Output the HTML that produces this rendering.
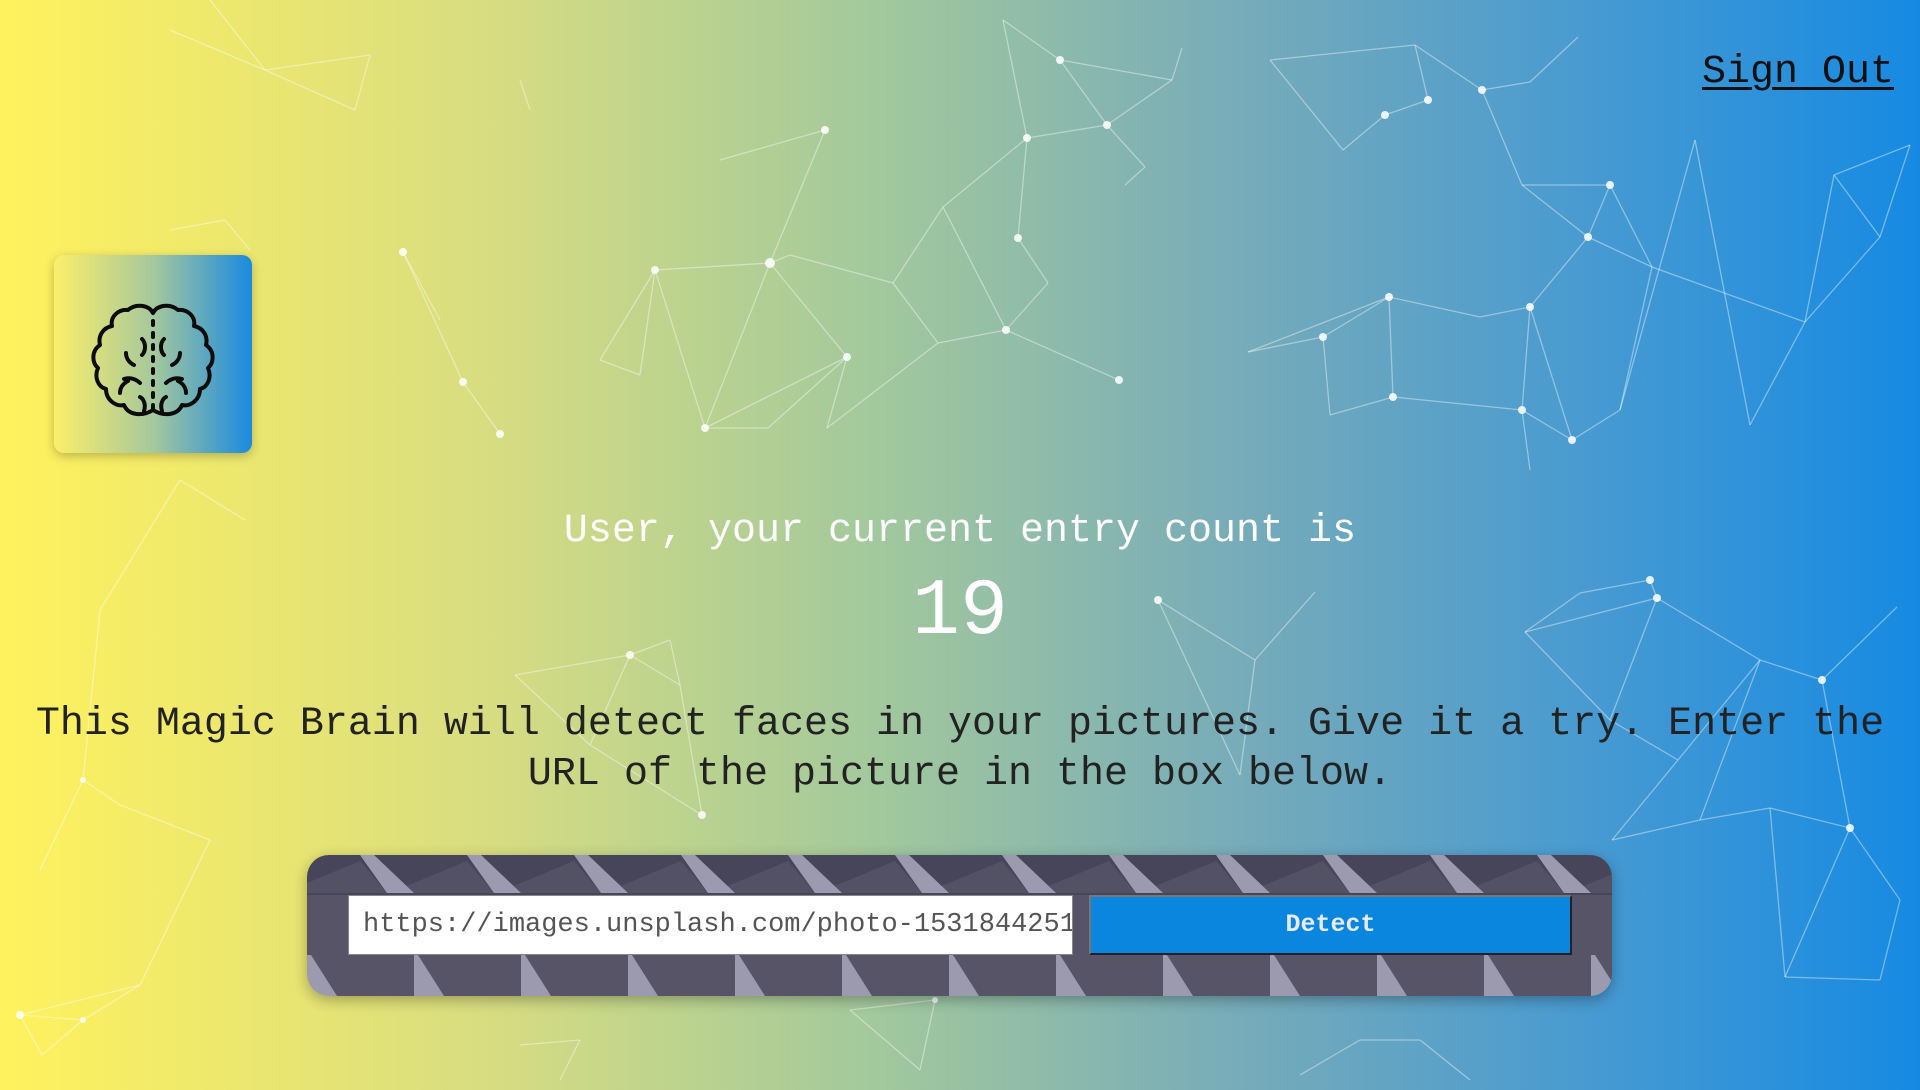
<!DOCTYPE html>
<html><head><meta charset="utf-8">
<style>
html,body{margin:0;padding:0;width:1920px;height:1090px;overflow:hidden}
body{background:linear-gradient(90deg,#fff25e 0%,#d8dd80 25%,#a4c99c 45%,#76abb9 65%,#4a9bd0 82%,#168ae2 100%);font-family:"Liberation Mono",monospace;position:relative}
#net{position:absolute;left:0;top:0}
.signout{position:absolute;left:1702px;top:50px;font-size:40px;color:#111;text-decoration:underline;text-decoration-thickness:3px;text-underline-offset:5px}
.logo{position:absolute;left:54px;top:255px;width:198px;height:198px;border-radius:10px;background:linear-gradient(90deg,#fbef6a,#a6c89c 50%,#1a8ae0);box-shadow:0 3px 10px rgba(0,0,0,.25)}
.t1{position:absolute;left:0;width:1920px;top:507px;text-align:center;color:#fff;font-size:40px;line-height:50px}
.t2{position:absolute;left:0;width:1920px;top:568px;text-align:center;color:#fff;font-size:80px;line-height:90px}
.t3{position:absolute;left:0;width:1920px;top:700px;text-align:center;color:#222;font-size:40px;line-height:50px}
.form{position:absolute;left:307px;top:855px;width:1305px;height:141px;border-radius:22px;overflow:hidden;box-shadow:0 4px 14px rgba(0,0,0,.3)}
.inp{position:absolute;left:41px;top:40px;width:725px;height:60px;background:#fff;box-sizing:border-box;border:1px solid #888;font-size:27px;line-height:58px;padding-left:14px;color:#555;white-space:nowrap;overflow:hidden}
.btn{position:absolute;left:782px;top:40px;width:483px;height:60px;background:#0a86de;box-sizing:border-box;border:2px solid #555;border-top-color:#777;border-left-color:#777;border-bottom-color:#222;border-right-color:#222;color:#e8eaff;font-size:25px;font-weight:bold;text-align:center;line-height:56px}
</style></head><body>
<svg id="net" width="1920" height="1090" stroke="#fff" stroke-opacity="0.4" stroke-width="1.3" fill="#fff">
<g>
<line x1="210" y1="0" x2="265" y2="70"/><line x1="265" y1="70" x2="370" y2="55"/><line x1="370" y1="55" x2="355" y2="110"/><line x1="265" y1="70" x2="355" y2="110"/><line x1="520" y1="80" x2="530" y2="110"/><line x1="170" y1="30" x2="265" y2="70"/>
<line x1="170" y1="230" x2="225" y2="220"/><line x1="225" y1="220" x2="250" y2="250"/>
<line x1="403" y1="252" x2="463" y2="382"/><line x1="463" y1="382" x2="500" y2="434"/><line x1="403" y1="252" x2="440" y2="320"/>
<line x1="720" y1="160" x2="825" y2="130"/><line x1="825" y1="130" x2="770" y2="263"/><line x1="770" y1="263" x2="655" y2="270"/><line x1="655" y1="270" x2="600" y2="360"/><line x1="600" y1="360" x2="640" y2="375"/><line x1="640" y1="375" x2="655" y2="270"/><line x1="655" y1="270" x2="705" y2="428"/><line x1="705" y1="428" x2="770" y2="263"/><line x1="770" y1="263" x2="847" y2="357"/><line x1="847" y1="357" x2="705" y2="428"/><line x1="705" y1="428" x2="768" y2="428"/><line x1="768" y1="428" x2="847" y2="357"/><line x1="847" y1="357" x2="827" y2="428"/><line x1="770" y1="263" x2="790" y2="255"/><line x1="790" y1="255" x2="893" y2="283"/><line x1="893" y1="283" x2="943" y2="207"/><line x1="943" y1="207" x2="1027" y2="138"/><line x1="1027" y1="138" x2="1107" y2="125"/><line x1="1107" y1="125" x2="1060" y2="60"/><line x1="1060" y1="60" x2="1003" y2="20"/><line x1="1003" y1="20" x2="1027" y2="138"/><line x1="1107" y1="125" x2="1145" y2="167"/><line x1="1145" y1="167" x2="1125" y2="185"/><line x1="1060" y1="60" x2="1172" y2="80"/><line x1="1172" y1="80" x2="1182" y2="48"/><line x1="1172" y1="80" x2="1107" y2="125"/><line x1="1027" y1="138" x2="1018" y2="238"/><line x1="1018" y1="238" x2="1048" y2="283"/><line x1="1048" y1="283" x2="1006" y2="330"/><line x1="1006" y1="330" x2="943" y2="207"/><line x1="893" y1="283" x2="938" y2="343"/><line x1="938" y1="343" x2="1006" y2="330"/><line x1="1006" y1="330" x2="1119" y2="380"/><line x1="938" y1="343" x2="827" y2="428"/>
<line x1="1270" y1="60" x2="1415" y2="45"/><line x1="1415" y1="45" x2="1428" y2="100"/><line x1="1428" y1="100" x2="1385" y2="115"/><line x1="1385" y1="115" x2="1343" y2="150"/><line x1="1343" y1="150" x2="1270" y2="60"/><line x1="1415" y1="45" x2="1482" y2="90"/><line x1="1482" y1="90" x2="1530" y2="82"/><line x1="1530" y1="82" x2="1578" y2="37"/><line x1="1482" y1="90" x2="1522" y2="185"/><line x1="1522" y1="185" x2="1610" y2="185"/><line x1="1610" y1="185" x2="1588" y2="237"/><line x1="1588" y1="237" x2="1522" y2="185"/><line x1="1588" y1="237" x2="1652" y2="267"/><line x1="1652" y1="267" x2="1610" y2="185"/><line x1="1588" y1="237" x2="1530" y2="307"/><line x1="1530" y1="307" x2="1480" y2="317"/><line x1="1480" y1="317" x2="1389" y2="297"/><line x1="1389" y1="297" x2="1323" y2="337"/><line x1="1323" y1="337" x2="1248" y2="352"/><line x1="1248" y1="352" x2="1389" y2="297"/><line x1="1389" y1="297" x2="1393" y2="397"/><line x1="1393" y1="397" x2="1330" y2="415"/><line x1="1330" y1="415" x2="1323" y2="337"/><line x1="1393" y1="397" x2="1522" y2="410"/><line x1="1522" y1="410" x2="1530" y2="307"/><line x1="1522" y1="410" x2="1572" y2="440"/><line x1="1572" y1="440" x2="1620" y2="410"/><line x1="1620" y1="410" x2="1652" y2="267"/><line x1="1530" y1="307" x2="1572" y2="440"/><line x1="1522" y1="410" x2="1530" y2="470"/><line x1="1695" y1="140" x2="1620" y2="410"/><line x1="1695" y1="140" x2="1750" y2="425"/><line x1="1750" y1="425" x2="1805" y2="322"/><line x1="1805" y1="322" x2="1834" y2="175"/><line x1="1834" y1="175" x2="1880" y2="237"/><line x1="1880" y1="237" x2="1910" y2="145"/><line x1="1834" y1="175" x2="1910" y2="145"/><line x1="1880" y1="237" x2="1805" y2="322"/><line x1="1652" y1="267" x2="1805" y2="322"/>
<line x1="1525" y1="632" x2="1580" y2="593"/><line x1="1580" y1="593" x2="1650" y2="580"/><line x1="1650" y1="580" x2="1657" y2="598"/><line x1="1657" y1="598" x2="1525" y2="632"/><line x1="1525" y1="632" x2="1610" y2="720"/><line x1="1610" y1="720" x2="1657" y2="598"/><line x1="1657" y1="598" x2="1760" y2="660"/><line x1="1760" y1="660" x2="1822" y2="680"/><line x1="1822" y1="680" x2="1897" y2="607"/><line x1="1760" y1="660" x2="1678" y2="760"/><line x1="1678" y1="760" x2="1610" y2="720"/><line x1="1678" y1="760" x2="1612" y2="840"/><line x1="1612" y1="840" x2="1700" y2="820"/><line x1="1700" y1="820" x2="1760" y2="660"/><line x1="1700" y1="820" x2="1770" y2="808"/><line x1="1770" y1="808" x2="1850" y2="828"/><line x1="1850" y1="828" x2="1822" y2="680"/><line x1="1850" y1="828" x2="1900" y2="900"/><line x1="1900" y1="900" x2="1880" y2="980"/><line x1="1880" y1="980" x2="1785" y2="977"/><line x1="1785" y1="977" x2="1850" y2="828"/><line x1="1770" y1="808" x2="1785" y2="977"/>
<line x1="1158" y1="600" x2="1255" y2="660"/><line x1="1255" y1="660" x2="1315" y2="592"/><line x1="1255" y1="660" x2="1240" y2="775"/><line x1="1240" y1="775" x2="1158" y2="600"/>
<line x1="40" y1="870" x2="83" y2="780"/><line x1="83" y1="780" x2="120" y2="805"/><line x1="83" y1="780" x2="100" y2="610"/><line x1="100" y1="610" x2="180" y2="480"/><line x1="180" y1="480" x2="245" y2="520"/><line x1="120" y1="805" x2="210" y2="840"/><line x1="210" y1="840" x2="140" y2="985"/><line x1="140" y1="985" x2="20" y2="1015"/><line x1="20" y1="1015" x2="83" y2="1020"/><line x1="83" y1="1020" x2="140" y2="985"/><line x1="20" y1="1015" x2="42" y2="1055"/><line x1="42" y1="1055" x2="83" y2="1020"/>
<line x1="515" y1="675" x2="630" y2="655"/><line x1="630" y1="655" x2="670" y2="640"/><line x1="670" y1="640" x2="680" y2="685"/><line x1="680" y1="685" x2="630" y2="655"/><line x1="630" y1="655" x2="590" y2="745"/><line x1="590" y1="745" x2="515" y2="675"/><line x1="680" y1="685" x2="702" y2="815"/><line x1="702" y1="815" x2="590" y2="745"/>
<line x1="850" y1="1010" x2="935" y2="1000"/><line x1="935" y1="1000" x2="920" y2="1070"/><line x1="920" y1="1070" x2="850" y2="1010"/><line x1="1300" y1="1075" x2="1360" y2="1040"/><line x1="1360" y1="1040" x2="1420" y2="1040"/><line x1="1420" y1="1040" x2="1470" y2="1080"/><line x1="520" y1="1045" x2="580" y2="1040"/><line x1="580" y1="1040" x2="560" y2="1080"/>
</g>
<g stroke="none" fill-opacity="0.85">
<circle cx="403" cy="252" r="4"/><circle cx="463" cy="382" r="4"/><circle cx="500" cy="434" r="4"/><circle cx="825" cy="130" r="4"/><circle cx="770" cy="263" r="5"/><circle cx="655" cy="270" r="4"/><circle cx="705" cy="428" r="4"/><circle cx="847" cy="357" r="4"/><circle cx="1027" cy="138" r="4"/><circle cx="1107" cy="125" r="4"/><circle cx="1060" cy="60" r="4"/><circle cx="1018" cy="238" r="4"/><circle cx="1119" cy="380" r="4"/><circle cx="1006" cy="330" r="4"/><circle cx="1385" cy="115" r="4"/><circle cx="1428" cy="100" r="4"/><circle cx="1482" cy="90" r="4"/><circle cx="1610" cy="185" r="4"/><circle cx="1588" cy="237" r="4"/><circle cx="1530" cy="307" r="4"/><circle cx="1389" cy="297" r="4"/><circle cx="1323" cy="337" r="4"/><circle cx="1393" cy="397" r="4"/><circle cx="1572" cy="440" r="4"/><circle cx="1522" cy="410" r="4"/><circle cx="1650" cy="580" r="4"/><circle cx="1657" cy="598" r="4"/><circle cx="1822" cy="680" r="4"/><circle cx="1850" cy="828" r="4"/><circle cx="1158" cy="600" r="4"/><circle cx="702" cy="815" r="4"/><circle cx="630" cy="655" r="4"/><circle cx="83" cy="780" r="3"/><circle cx="20" cy="1015" r="4"/><circle cx="83" cy="1020" r="3"/><circle cx="935" cy="1000" r="3"/>
</g>
</svg>

<div class="signout">Sign Out</div>

<div class="logo">
<svg width="198" height="198" viewBox="0 0 198 198" fill="none" stroke="#0c0c0c" stroke-width="4" stroke-linecap="round" stroke-linejoin="round">
<path d="M99 58 C95 50 82 48 74 55 C64 54 56 62 58 71 C48 73 44 82 46 90 C37 96 38 108 44 113 C40 122 44 132 52 134 C52 145 62 152 70 150 C74 160 88 162 99 155 C110 162 124 160 128 150 C136 152 146 145 146 134 C154 132 158 122 154 113 C160 108 161 96 152 90 C154 82 150 73 140 71 C142 62 134 54 124 55 C116 48 103 50 99 58"/>
<path d="M99 66v4M99 78v4M99 90v4M99 102v4M99 114v4M99 126v4M99 138v4M99 150v3"/>
<path d="M88 84c4 4 4 12 0 16M110 84c-4 4-4 12 0 16M72 98c0 6 4 10 8 12M126 98c0 6-4 10-8 12M70 124c6-2 12 0 16 4M128 124c-6-2-12 0-16 4M66 138c0-6 4-10 8-12M132 138c0-6-4-10-8-12M86 142c4 2 6 8 4 14M112 142c-4 2-6 8-4 14"/>
</svg>
</div>

<div class="t1">User, your current entry count is</div>
<div class="t2">19</div>
<div class="t3">This Magic Brain will detect faces in your pictures. Give it a try. Enter the<br>URL of the picture in the box below.</div>

<div class="form">
<svg width="1305" height="141" style="position:absolute;left:0;top:0">
<defs>
<pattern id="p" width="107" height="141" patternUnits="userSpaceOnUse" x="0">
<rect width="107" height="141" fill="#565466"/>
<rect width="107" height="40" fill="#47455a"/>
<polygon points="-27,38 0,28 53,6 80,38" fill="#535164"/>
<polygon points="80,38 107,28 160,6 187,38" fill="#535164"/>
<polygon points="53,0 67,0 107,38 80,38" fill="#9c9aae"/>
<polygon points="0,100 4,100 30,141 0,141" fill="#9c9aae"/>
</pattern>
</defs>
<rect width="1305" height="141" fill="url(#p)"/>
</svg>
<div class="inp">https://images.unsplash.com/photo-1531844251246-9a1bfaae09fc</div>
<div class="btn">Detect</div>
</div>
</body></html>
